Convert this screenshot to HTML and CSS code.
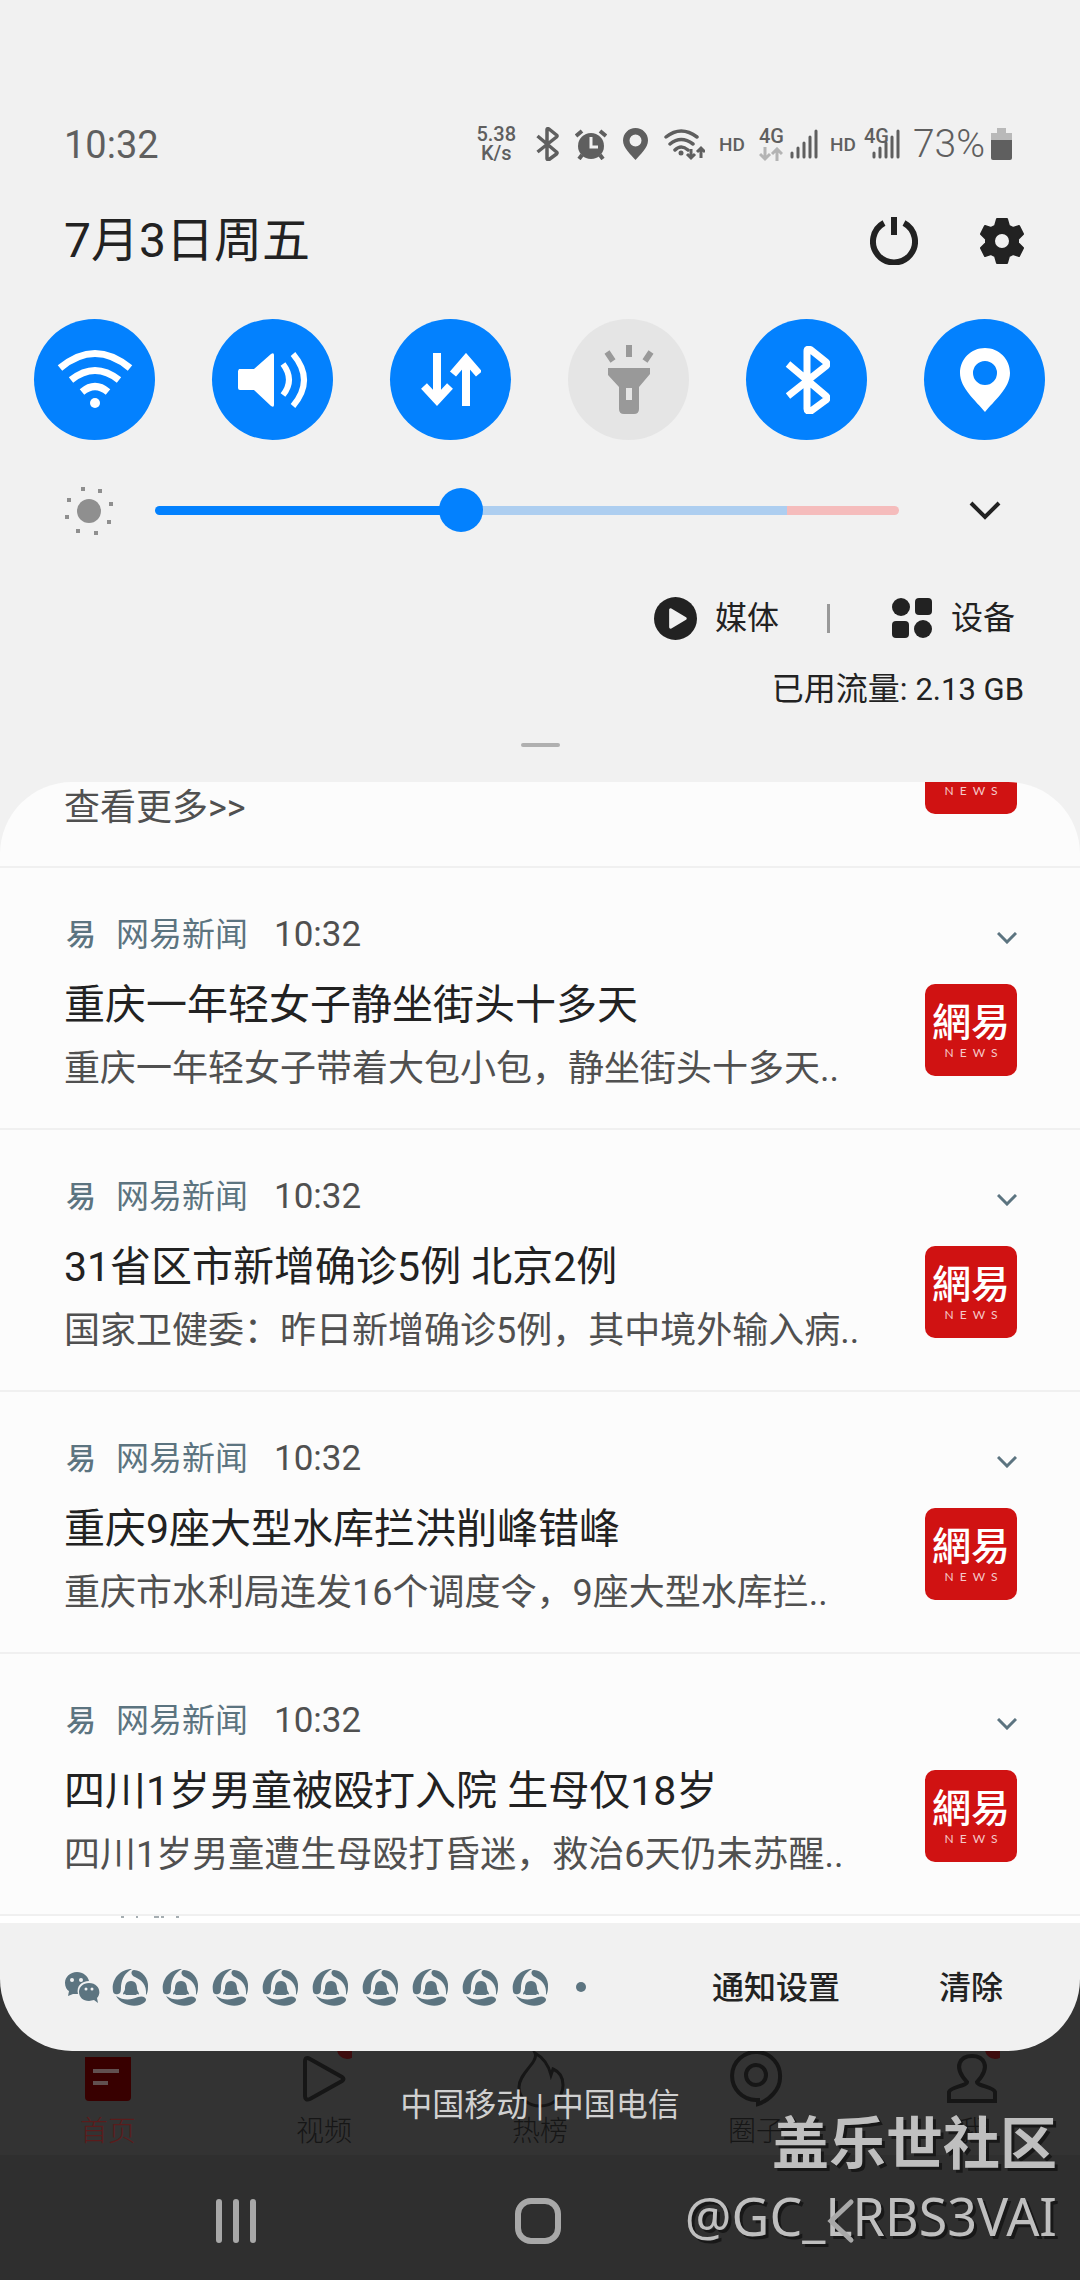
FILE: index.html
```html
<!DOCTYPE html>
<html lang="zh-CN">
<head>
<meta charset="utf-8">
<meta name="viewport" content="width=device-width, initial-scale=1">
<title>通知</title>
<link rel="stylesheet" href="styles.css">
</head>
<body>
<svg class="defs" aria-hidden="true">
  <symbol id="bt" viewBox="0 0 46 68"><path d="M4 18 42 50 Q44 52 42 54 L27 65 Q23 66 23 63 L23 5 Q23 2 27 4 L42 16 Q44 18 42 20 L4 50" fill="none" stroke="currentColor" stroke-width="7" stroke-linejoin="round"/></symbol>
  <symbol id="pin" viewBox="0 0 50 64"><path fill-rule="evenodd" fill="currentColor" d="M25 0C11 0 0 11 0 25c0 15 16 28 25 39 9-11 25-24 25-39C50 11 39 0 25 0Zm0 13a12 12 0 1 1 0 24 12 12 0 0 1 0-24Z"/></symbol>
  <symbol id="down" viewBox="0 0 20 12"><path d="M1 1 10 10 19 1" fill="none" stroke="currentColor" stroke-width="3"/></symbol>
  <symbol id="signal" viewBox="0 0 28 30"><path d="M2 24v4M8 19v9M14 14v14M20 8v20M26 2v26" stroke="currentColor" stroke-width="3" stroke-linecap="round"/></symbol>
  <symbol id="qq" viewBox="0 0 38 38"><g fill="currentColor"><path d="M19 13c-5 0-6 4-6 8 0 2-2 3-2 5 0 1 2 0 2 0l1 1h10l1-1s2 1 2 0c0-2-2-3-2-5 0-4-1-8-6-8Z"/><path d="M22 2c8 0 15 9 14 17 0 4-1 7-2 8 1-11-5-15-11-18-5-2-4-7-1-7Z"/><path d="M33 34c-6 6-23 5-29-6 8 5 15 4 22 1 6-2 10 2 7 5Z"/><path d="M1 23C-1 13 7 1 20 1 13 5 10 10 9 18c0 4 0 8-3 8-3 1-5-1-5-3Z"/></g></symbol>
</svg>

<div class="phone">
<main class="shade">
  <div class="statusbar">
    <time class="clock">10:32</time>
    <div class="status-icons">
      <span class="speed">5.38<br>K/s</span>
      <svg width="24" height="34"><use href="#bt"/></svg>
      <svg width="32" height="32" viewBox="0 0 32 32"><circle cx="16" cy="18" r="13" fill="#5f5f5f"/><path d="M1 8 7 3M31 8 25 3M7 27l-3 4M25 27l3 4" stroke="#5f5f5f" stroke-width="4"/><path d="M16 9v10h7" fill="none" stroke="#f1f1f1" stroke-width="3"/></svg>
      <svg width="25" height="32"><use href="#pin"/></svg>
      <svg class="wlan" width="41" height="33" viewBox="0 0 41 33"><g fill="none" stroke="#5f5f5f"><path d="M2 9Q17-3 33 9M6 16q11-9 23 0M11 22q6-6 13 0" stroke-width="3.5" stroke-linecap="round"/><path d="M27 21v8M23 26l4 4 4-4M37 30v-9M33 24l4-4 4 4" stroke-width="3"/></g><circle cx="17" cy="25" r="2.5" fill="#5f5f5f"/></svg>
      <span class="hd">HD</span>
      <span class="cell cell-a"><b>4G</b><svg width="24" height="15" viewBox="0 0 24 15"><path d="M6 0v12M1 7l5 5 5-5M18 14V2M13 7l5-5 5 5" fill="none" stroke="#b4b4b4" stroke-width="3"/></svg><svg class="bars" width="28" height="30"><use href="#signal"/></svg></span>
      <span class="hd">HD</span>
      <span class="cell cell-b"><b>4G</b><svg class="bars" width="28" height="30"><use href="#signal"/></svg></span>
      <span class="charge">73%</span>
      <svg class="battery" width="21" height="34" viewBox="0 0 21 34"><path d="M6 1h9v5h6v8H0V6h6Z" fill="#b9b9b9"/><path d="M0 13h21v18q0 2-2 2H2q-2 0-2-2Z" fill="#5f5f5f"/></svg>
    </div>
  </div>

  <div class="daterow">
    <h1>7月3日周五</h1>
    <button aria-label="电源"><svg width="48" height="48" viewBox="0 0 48 48"><path d="M14 6A21 21 0 1 0 34 6M24 0v18" fill="none" stroke="#222" stroke-width="6"/></svg></button>
    <button aria-label="设置"><svg width="44" height="46" viewBox="0 0 44 46"><path fill="#222" stroke="#222" stroke-width="2" stroke-linejoin="round" fill-rule="evenodd" d="M17 1h10l2 7 4 2 6-2 4 8-5 5v4l5 5-4 8-6-2-4 2-2 7H17l-2-7-4-2-6 2-4-8 5-5v-4L1 16l4-8 6 2 4-2ZM22 15a8 8 0 1 0 0 16 8 8 0 0 0 0-16Z"/></svg></button>
  </div>

  <div class="tiles">
    <button class="tile on" aria-label="WLAN"><svg width="76" height="62" viewBox="0 0 76 62"><path d="M3 19Q38-10 73 19M14 31q24-19 48 0M25 43q13-11 26 0" fill="none" stroke="#fff" stroke-width="7"/><circle cx="38" cy="54" r="5" fill="#fff"/></svg></button>
    <button class="tile on" aria-label="声音"><svg width="72" height="58" viewBox="0 0 72 58"><path d="M2 18h15L34 3q3-2 3 1v50q0 3-3 1L17 39H3q-2 0-2-2V20Z" fill="#fff"/><path d="M46 13q12 16 0 31M56 3q22 26 0 52" fill="none" stroke="#fff" stroke-width="6"/></svg></button>
    <button class="tile on" aria-label="移动数据"><svg width="60" height="54" viewBox="0 0 60 54"><path d="M16 0v47M3 33l13 14 13-14M45 53V6M32 21 45 6l13 15" fill="none" stroke="#fff" stroke-width="8"/></svg></button>
    <button class="tile" aria-label="手电筒"><svg width="50" height="70" viewBox="0 0 50 70"><path fill="#999" fill-rule="evenodd" d="M4 23h42v6L35 42v22q0 5-5 5H20q-5 0-5-5V42L4 30ZM22 43v12h6V43Z"/><path d="M25 0v12M3 7l6 9M47 7l-6 9" stroke="#999" stroke-width="6"/></svg></button>
    <button class="tile on" aria-label="蓝牙"><svg width="46" height="68"><use href="#bt"/></svg></button>
    <button class="tile on" aria-label="位置"><svg width="50" height="64"><use href="#pin"/></svg></button>
  </div>

  <div class="brightness">
    <svg width="52" height="52" viewBox="0 0 52 52"><g fill="#8f8f8f"><circle cx="26" cy="27" r="12"/></g><path d="M20 5v.1M37 7v.1M6 16v.1M48 20v.1M4 33v.1M46 38v.1M15 47v.1M33 49v.1" stroke="#8f8f8f" stroke-width="4" stroke-linecap="square"/></svg>
    <input type="range" min="0" max="1000" value="406" aria-label="亮度">
    <button aria-label="展开"><svg width="32" height="20" viewBox="0 0 32 20"><path d="M2 3 16 17 30 3" fill="none" stroke="#222" stroke-width="4"/></svg></button>
  </div>

  <div class="panels">
    <button><svg width="43" height="43" viewBox="0 0 44 44"><circle cx="22" cy="22" r="22" fill="#222"/><path d="M17 13v18l15-9Z" fill="#f1f1f1" stroke="#f1f1f1" stroke-width="3" stroke-linejoin="round"/></svg>媒体</button>
    <span class="divider"></span>
    <button><svg width="42" height="42" viewBox="0 0 42 42"><g fill="#222"><circle cx="10" cy="10" r="9"/><circle cx="32" cy="32" r="9"/><rect x="24" y="1" width="17" height="17" rx="4"/><rect x="1" y="24" width="17" height="17" rx="4"/></g></svg>设备</button>
  </div>
  <p class="usage">已用流量: <span>2.13 GB</span></p>
  <div class="handle"></div>

  <section class="list">
    <article class="cut">
      <p class="text">查看更多&gt;&gt;</p>
      <div class="cut-logo"><div class="logo"><span class="mark">網易</span><span class="news">N&nbsp; E&nbsp; W&nbsp; S</span></div></div>
    </article>
    <article class="note">
      <header><span class="app-icon">易</span><span class="app">网易新闻</span><time>10:32</time><button aria-label="展开"><svg width="20" height="12"><use href="#down"/></svg></button></header>
      <div class="content"><div class="copy"><h2>重庆一年轻女子静坐街头十多天</h2><p class="text">重庆一年轻女子带着大包小包，静坐街头十多天..</p></div>
      <div class="logo"><span class="mark">網易</span><span class="news">N&nbsp; E&nbsp; W&nbsp; S</span></div></div>
    </article>
    <article class="note">
      <header><span class="app-icon">易</span><span class="app">网易新闻</span><time>10:32</time><button aria-label="展开"><svg width="20" height="12"><use href="#down"/></svg></button></header>
      <div class="content"><div class="copy"><h2>31省区市新增确诊5例 北京2例</h2><p class="text">国家卫健委：昨日新增确诊5例，其中境外输入病..</p></div>
      <div class="logo"><span class="mark">網易</span><span class="news">N&nbsp; E&nbsp; W&nbsp; S</span></div></div>
    </article>
    <article class="note">
      <header><span class="app-icon">易</span><span class="app">网易新闻</span><time>10:32</time><button aria-label="展开"><svg width="20" height="12"><use href="#down"/></svg></button></header>
      <div class="content"><div class="copy"><h2>重庆9座大型水库拦洪削峰错峰</h2><p class="text">重庆市水利局连发16个调度令，9座大型水库拦..</p></div>
      <div class="logo"><span class="mark">網易</span><span class="news">N&nbsp; E&nbsp; W&nbsp; S</span></div></div>
    </article>
    <article class="note">
      <header><span class="app-icon">易</span><span class="app">网易新闻</span><time>10:32</time><button aria-label="展开"><svg width="20" height="12"><use href="#down"/></svg></button></header>
      <div class="content"><div class="copy"><h2>四川1岁男童被殴打入院 生母仅18岁</h2><p class="text">四川1岁男童遭生母殴打昏迷，救治6天仍未苏醒..</p></div>
      <div class="logo"><span class="mark">網易</span><span class="news">N&nbsp; E&nbsp; W&nbsp; S</span></div></div>
    </article>
    <div class="peek"><svg width="62" height="2" viewBox="0 0 62 2"><path d="M2 1h3M17 1h2M35 1h5M42 1h3M57 1h3" stroke="#a5adb1" stroke-width="2"/></svg></div>
  </section>

  <footer class="actions">
    <div class="apps">
      <svg width="36" height="34" viewBox="0 0 36 34"><g fill="#5c7480"><path d="M13 2C6 2 1 7 1 13c0 4 2 7 4 8l-1 5 5-2h5c-2-8 4-13 11-13-1-5-6-9-12-9Z"/><path d="M25 13c-6 0-10 4-10 9s4 9 10 9l5-1 4 3-1-5c5-5 2-15-8-15Z"/></g><g fill="#f1f1f1"><circle cx="8" cy="10" r="2"/><circle cx="17" cy="10" r="2"/><circle cx="22" cy="19" r="1.500"/><circle cx="28" cy="19" r="1.500"/></g></svg>
      <svg width="38" height="38"><use href="#qq"/></svg><svg width="38" height="38"><use href="#qq"/></svg><svg width="38" height="38"><use href="#qq"/></svg><svg width="38" height="38"><use href="#qq"/></svg><svg width="38" height="38"><use href="#qq"/></svg><svg width="38" height="38"><use href="#qq"/></svg><svg width="38" height="38"><use href="#qq"/></svg><svg width="38" height="38"><use href="#qq"/></svg><svg width="38" height="38"><use href="#qq"/></svg>
      <svg width="38" height="38" viewBox="0 0 38 38"><circle cx="19" cy="19" r="5" fill="#5c7480"/></svg>
    </div>
    <button>通知设置</button>
    <button>清除</button>
  </footer>
</main>

<div class="behind">
  <nav class="tabs">
    <a href="#" class="active"><svg width="56" height="58" viewBox="0 0 56 58"><path d="M5 6h46v40q0 4-4 4H9q-4 0-4-4Z" fill="#380000"/><path d="M13 20h26M13 32h15" stroke="#615050" stroke-width="4"/></svg>首页</a>
    <a href="#"><svg width="56" height="58" viewBox="0 0 56 58"><path d="M9 11v34q0 5 5 3l32-18q3-2 0-4L14 8q-5-3-5 3Z" fill="none" stroke="#161616" stroke-width="4"/><circle cx="51" cy="-2" r="10" fill="#3d0c0e"/></svg>视频</a>
    <a href="#"><svg width="56" height="58" viewBox="0 0 56 58"><path d="M23 2c4 9-16 20-16 34 0 11 9 19 21 19s23-8 23-21c0-8-3-13-10-16l-2 6C37 16 32 7 23 2Z" fill="none" stroke="#161616" stroke-width="3"/></svg>热榜</a>
    <a href="#"><svg width="56" height="58" viewBox="0 0 56 58"><path d="M30 47v6c12-4 22-15 22-26A24 24 0 1 0 28 49" fill="none" stroke="#161616" stroke-width="4"/><circle cx="28" cy="24" r="10" fill="none" stroke="#161616" stroke-width="4"/></svg>圈子</a>
    <a href="#"><svg width="56" height="58" viewBox="0 0 56 58"><path d="M23 31C8 15 17 5 28 5s20 10 5 26c0 4 17 5 18 10v9H5v-9c1-5 18-6 18-10Z" fill="none" stroke="#161616" stroke-width="4"/><circle cx="51" cy="-2" r="10" fill="#3d0c0e"/></svg>我</a>
  </nav>
  <p class="carrier">中国移动 | 中国电信</p>
  <div class="watermark"><strong>盖乐世社区</strong><span>@GC_LRBS3VAI</span></div>
  <nav class="softkeys">
    <button aria-label="最近"><svg width="42" height="46" viewBox="0 0 42 46"><path d="M4 4v38M21 4v38M38 4v38" stroke="#a8a8a8" stroke-width="6" stroke-linecap="round"/></svg></button>
    <button aria-label="主页"><svg width="48" height="48" viewBox="0 0 48 48"><rect x="4" y="4" width="40" height="40" rx="13" fill="none" stroke="#a8a8a8" stroke-width="6"/></svg></button>
    <button aria-label="返回"><svg width="28" height="46" viewBox="0 0 28 46"><path d="M24 4 4 23l20 19" fill="none" stroke="#a8a8a8" stroke-width="5" stroke-linecap="round"/></svg></button>
  </nav>
</div>
</div>
</body>
</html>
```
FILE: styles.css
```css
* { box-sizing: border-box; }
body {
  margin: 0;
  background: #2f2f2f;
  color: #222;
  font-family: Roboto, "Noto Sans CJK SC", sans-serif;
  font-size: 32px;
}
h1, h2, p { margin: 0; font-weight: 400; }
button { border: 0; padding: 0; background: none; color: inherit; font: inherit; display: flex; align-items: center; }
svg { display: block; flex: none; }
.defs { position: absolute; width: 0; height: 0; }
.phone { background: #333; }

.shade { background: #f1f1f1; border-radius: 0 0 72px 72px; overflow: hidden; padding-top: 115px; }

.statusbar { display: flex; justify-content: space-between; align-items: center; height: 60px; padding: 0 68px 0 64px; color: #5f5f5f; }
.clock { font-size: 38px; }
.status-icons { display: flex; align-items: center; gap: 16px; height: 58px; margin-bottom: 2px; }
.speed { margin-right: 3px; font-size: 20px; font-weight: 500; line-height: 19px; text-align: center; }
.wlan { margin-right: -2px; }
.hd { font-size: 19px; font-weight: 500; margin-right: -2px; }
.cell { position: relative; height: 34px; }
.cell b { display: block; font-size: 20px; font-weight: 500; line-height: 18px; height: 20px; }
.cell .bars { position: absolute; right: 0; bottom: 2px; }
.cell-a { width: 59px; margin-right: -4px; }
.cell-b { width: 36px; margin-left: -6px; }
.charge { font-size: 39px; font-weight: 300; margin-left: -3px; }
.battery { margin-left: -10px; }

.daterow { display: flex; align-items: center; gap: 62px; height: 62px; margin-top: 35px; padding: 0 56px 0 64px; }
.daterow h1 { flex: 1; font-size: 48px; line-height: 60px; }

.tiles { display: flex; justify-content: space-between; margin-top: 47px; padding: 0 35px 0 34px; }
.tile { width: 121px; height: 121px; border-radius: 50%; background: #e5e5e5; justify-content: center; }
.tile.on { background: #0381fe; color: #fff; }

.brightness { display: flex; align-items: center; height: 50px; margin-top: 45px; padding: 0 79px 0 63px; }
.brightness input {
  flex: 1; appearance: none; height: 44px; margin: 0 70px 0 40px; background: none;
}
.brightness input::-webkit-slider-runnable-track {
  height: 9px; border-radius: 5px;
  background: linear-gradient(90deg, #0381fe 41%, #adcef0 41%, #adcef0 85%, #f5bcbc 85%);
}
.brightness input::-webkit-slider-thumb {
  appearance: none; width: 44px; height: 44px; margin-top: -18px; border-radius: 50%; background: #0381fe;
}

.panels { display: flex; justify-content: flex-end; align-items: center; height: 44px; margin-top: 61px; padding-right: 65px; }
.panels button { gap: 18px; line-height: 43px; }
.divider { width: 3px; height: 29px; margin: 0 61px 0 48px; background: #999; }
.usage { height: 48px; margin-top: 25px; padding-right: 56px; line-height: 48px; text-align: right; }
.usage span { font-size: 31px; }
.handle { width: 39px; height: 4px; margin: 30px auto 35px; border-radius: 2px; background: #b0b0b0; }

.list { border-radius: 72px 72px 0 0; background: #fcfcfc; overflow: hidden; }
.cut, .note { border-bottom: 2px solid #f0f0f0; }
.cut { display: flex; justify-content: space-between; height: 86px; padding: 0 63px 0 64px; }
.cut .text { line-height: 52px; }
.cut-logo { display: flex; align-items: flex-end; height: 32px; overflow: hidden; }
.text { height: 48px; color: #505050; font-size: 36px; line-height: 50px; white-space: nowrap; }
.note { padding: 45px 63px 36px 64px; }
.note header { display: flex; align-items: center; height: 44px; line-height: 44px; }
.app-icon { width: 30px; padding-left: 2px; color: #5c7480; font-size: 30px; font-weight: 500; }
.app { margin: 0 26px 0 22px; color: #5c7480; font-size: 33px; line-height: 42px; }
.note time { flex: 1; color: #505050; font-size: 35px; }
.note header button { padding-top: 6px; color: #5c7480; }
.content { display: flex; justify-content: space-between; }
.copy { padding-top: 17px; }
h2 { height: 60px; margin-bottom: 10px; font-size: 41px; line-height: 62px; white-space: nowrap; }
.logo { flex: none; display: flex; flex-direction: column; align-items: center; width: 92px; height: 92px; padding-top: 16px; border-radius: 10px; background: #d01212; color: #fff; }
.content .logo { margin-top: 27px; }
.mark { height: 46px; font-family: "Noto Sans CJK TC", sans-serif; font-size: 39px; font-weight: 500; line-height: 39px; }
.news { color: #f5c9c9; font-family: Lato, sans-serif; font-size: 12px; line-height: 14px; white-space: nowrap; }
.peek { height: 7px; padding-left: 119px; background: #fff; }

.actions { display: flex; align-items: center; height: 128px; padding-right: 77px; padding-left: 64px; font-weight: 500; }
.apps { flex: 1; display: flex; align-items: center; gap: 12px; color: #5c7480; }
.actions button { padding-bottom: 4px; }
.actions button + button { margin-left: 99px; }

.behind { position: relative; background: #2f2f2f; }
.phone::after { content: none; }
.tabs { display: grid; grid-template-columns: repeat(5, 1fr); height: 104px; background: #333; }
.tabs a { display: flex; flex-direction: column; align-items: center; color: #161616; font-size: 28px; font-weight: 300; line-height: 46px; text-decoration: none; }
.tabs .active { color: #5a1c1c; }
.carrier { position: absolute; top: 30px; left: 0; right: 0; color: #d0d0d0; line-height: 48px; text-align: center; }
.softkeys { position: relative; display: grid; grid-template-columns: repeat(3, 1fr); height: 125px; padding: 0 88px 0 85px; }
.softkeys button { justify-content: center; padding-top: 6px; }
.watermark { position: absolute; right: 23px; top: 54px; display: flex; flex-direction: column; align-items: flex-end; color: #bfbfbf; text-shadow: 3px 3px 0 #181818; pointer-events: none; }
.watermark strong { font-size: 57px; font-weight: 700; line-height: 80px; }
.watermark span { font-family: "Noto Sans", sans-serif; font-size: 52px; line-height: 62px; }
```
